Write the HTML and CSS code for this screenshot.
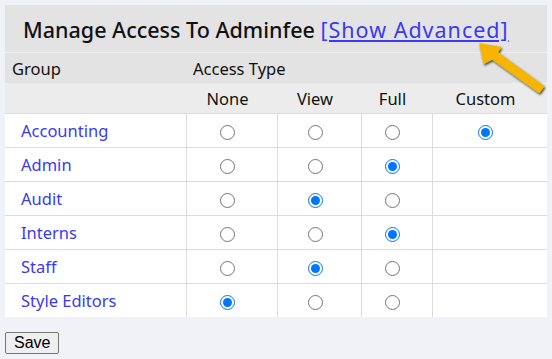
FILE: index.html
```html
<!DOCTYPE html>
<html>
<head>
<meta charset="utf-8">
<link rel="stylesheet" href="styles.css">
</head>
<body>
<div class="page">
  <form class="panel">
    <h1 class="title">Manage Access To Adminfee <a href="#" class="advanced">[Show Advanced]</a></h1>
    <table class="grid">
      <colgroup>
        <col class="c-group"><col class="c-none"><col class="c-view"><col class="c-full"><col class="c-custom">
      </colgroup>
      <thead>
        <tr class="head1"><th class="lbl">Group</th><th class="lbl" colspan="4">Access Type</th></tr>
        <tr class="head2"><th></th><th class="opt">None</th><th class="opt">View</th><th class="opt">Full</th><th class="opt">Custom</th></tr>
      </thead>
      <tbody>
        <tr><td class="name"><a href="#">Accounting</a></td><td class="opt"><input type="radio" name="g1"></td><td class="opt"><input type="radio" name="g1"></td><td class="opt"><input type="radio" name="g1"></td><td class="opt"><input type="radio" name="g1" checked></td></tr>
        <tr><td class="name"><a href="#">Admin</a></td><td class="opt"><input type="radio" name="g2"></td><td class="opt"><input type="radio" name="g2"></td><td class="opt"><input type="radio" name="g2" checked></td><td class="opt"></td></tr>
        <tr><td class="name"><a href="#">Audit</a></td><td class="opt"><input type="radio" name="g3"></td><td class="opt"><input type="radio" name="g3" checked></td><td class="opt"><input type="radio" name="g3"></td><td class="opt"></td></tr>
        <tr><td class="name"><a href="#">Interns</a></td><td class="opt"><input type="radio" name="g4"></td><td class="opt"><input type="radio" name="g4"></td><td class="opt"><input type="radio" name="g4" checked></td><td class="opt"></td></tr>
        <tr><td class="name"><a href="#">Staff</a></td><td class="opt"><input type="radio" name="g5"></td><td class="opt"><input type="radio" name="g5" checked></td><td class="opt"><input type="radio" name="g5"></td><td class="opt"></td></tr>
        <tr><td class="name"><a href="#">Style Editors</a></td><td class="opt"><input type="radio" name="g6" checked></td><td class="opt"><input type="radio" name="g6"></td><td class="opt"><input type="radio" name="g6"></td><td class="opt"></td></tr>
      </tbody>
    </table>
    <div class="actions"><button type="button" class="save">Save</button></div>
  </form>
  <svg class="pointer" viewBox="470 35 82 70" width="82" height="70">
    <defs>
      <filter id="sh" x="-30%" y="-30%" width="160%" height="160%">
        <feDropShadow dx="1" dy="1.5" stdDeviation="1.2" flood-color="#000" flood-opacity="0.75"/>
      </filter>
    </defs>
    <polygon filter="url(#sh)" fill="#f6b500" stroke="#f6b500" stroke-width="1.5" stroke-linejoin="round"
      points="480,44 500.5,47.5 496.9,52.4 543.5,86.4 539.2,92.3 492.3,58.8 484,63.2"/>
  </svg>
</div>
</body>
</html>
```
FILE: styles.css
```css
html, body {
  margin: 0;
  padding: 0;
  background: #f0f2f7;
}
body {
  font-family: "Noto Sans", "Open Sans", sans-serif;
  color: #111;
}
.page {
  position: relative;
  width: 552px;
  height: 359px;
  padding: 5px;
  box-sizing: border-box;
}
.panel {
  margin: 0;
  width: 542px;
}
.title {
  margin: 0;
  height: 47px;
  line-height: 50px;
  padding-left: 18px;
  font-size: 21.5px;
  font-weight: 500;
  background: #e3e3e3;
  border-bottom: 1px solid #ececec;
  color: #111;
  white-space: nowrap;
}
.advanced {
  color: #3a3af0;
  text-decoration: underline;
  letter-spacing: 1px;
  font-weight: normal;
}
.grid {
  width: 542px;
  border-collapse: collapse;
  table-layout: fixed;
  font-size: 16.5px;
}
.c-group { width: 181px; }
.c-none { width: 91px; }
.c-view { width: 84px; }
.c-full { width: 71px; }
.c-custom { width: 115px; }
.grid th {
  font-weight: normal;
  height: 30px;
  padding: 0;
  color: #111;
  vertical-align: middle;
}
.head1 th { background: #e3e3e3; }
.head2 th { background: #ececec; }
.grid th.lbl {
  text-align: left;
  padding-left: 7px;
}
.grid th.opt {
  text-align: center;
  padding-right: 8px;
}
.grid td {
  background: #fff;
  border: 1px solid #dcdcdc;
  height: 33px;
  padding: 0;
  vertical-align: middle;
}
.grid td:first-child { border-left: 0; }
.grid td:last-child { border-right: 0; }
.grid tbody tr:last-child td { border-bottom: 0; }
.grid td.name {
  padding-left: 16px;
}
.grid td.name a {
  color: #3a3af0;
  text-decoration: none;
}
.grid td.opt {
  text-align: center;
  padding-right: 8px;
}
.grid input[type="radio"] {
  width: 15px;
  height: 15px;
  margin: 0;
  vertical-align: middle;
}
.actions {
  padding-top: 15px;
}
.save {
  display: block;
  font-family: "Liberation Sans", Arial, sans-serif;
  font-size: 16px;
  height: 22px;
  padding: 0 8px;
  background: #efefef;
  border: 1px solid #767676;
  border-radius: 2px;
  color: #000;
}
.pointer {
  position: absolute;
  left: 470px;
  top: 35px;
}
```
